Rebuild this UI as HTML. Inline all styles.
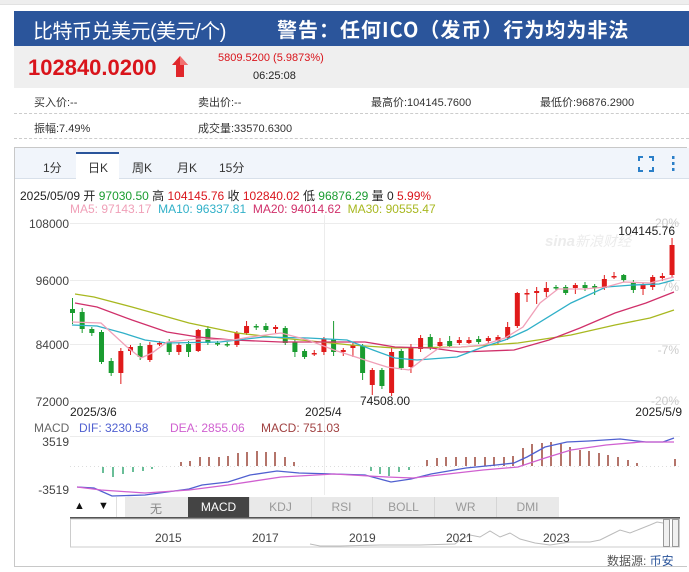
<!DOCTYPE html>
<html><head><meta charset="utf-8"><style>
*{margin:0;padding:0;box-sizing:border-box}
body{width:689px;height:572px;background:#fff;position:relative;overflow:hidden;font-family:"Liberation Sans","Noto Sans CJK SC",sans-serif;color:#333}
.a{position:absolute;white-space:nowrap}
.f11{font-size:11px}.f12{font-size:12px}
</style></head><body>
<div class="a" style="left:0;top:0;width:689px;height:5px;background:#eee;border-bottom:1px solid #e2e2e2"></div>
<div class="a" style="left:14px;top:11px;width:675px;height:35px;background:#2b559b"></div>
<div class="a" style="left:33px;top:15px;font-size:20px;color:#fff;letter-spacing:-0.5px">比特币兑美元(美元/个)</div>
<div class="a" style="left:277px;top:14px;font-size:20px;color:#fff;font-weight:bold;font-family:'Noto Sans CJK SC',sans-serif;letter-spacing:1px">警告：任何ICO（发币）行为均为非法</div>
<div class="a" style="left:14px;top:46px;width:675px;height:42px;background:#efefef"></div>
<div class="a" style="left:28px;top:55px;font-size:22px;font-weight:bold;color:#d9141b">102840.0200</div>
<svg class="a" style="left:172px;top:55px" width="16" height="24"><polygon points="8,1 16,10 12,10 12,22 4,22 4,10 0,10" fill="#e0262b"/><polygon points="8,1 16,10 8,10" fill="#f27070"/></svg>
<div class="a f11" style="left:218px;top:52px;color:#d9141b">5809.5200 (5.9873%)</div>
<div class="a f11" style="left:253px;top:70px;color:#222">06:25:08</div>
<div class="a f11" style="left:34px;top:94px">买入价:--</div>
<div class="a f11" style="left:198px;top:94px">卖出价:--</div>
<div class="a f11" style="left:371px;top:94px">最高价:104145.7600</div>
<div class="a f11" style="left:540px;top:94px">最低价:96876.2900</div>
<div class="a" style="left:14px;top:113px;width:675px;border-top:1px dashed #ccc"></div>
<div class="a f11" style="left:34px;top:120px">振幅:7.49%</div>
<div class="a f11" style="left:198px;top:120px">成交量:33570.6300</div>
<div class="a" style="left:14px;top:138px;width:675px;border-top:1px dashed #ccc"></div>
<div class="a" style="left:14px;top:147px;width:673px;height:420px;border:1px solid #c8c8c8;border-right:none"></div>
<div class="a" style="left:15px;top:148px;width:674px;height:31px;background:#f1f5fb;border-bottom:1px solid #d8e0ea"></div>
<div class="a" style="left:76px;top:152px;width:43px;height:28px;background:#fff;border-top:2px solid #2b559b"></div>
<div class="a f12" style="left:43px;top:159px">1分</div>
<div class="a f12" style="left:88px;top:159px">日K</div>
<div class="a f12" style="left:132px;top:159px">周K</div>
<div class="a f12" style="left:177px;top:159px">月K</div>
<div class="a f12" style="left:219px;top:159px">15分</div>
<svg class="a" style="left:637px;top:155px" width="44" height="18"><g stroke="#2b7fc8" stroke-width="2" fill="none"><path d="M2 6V2H6M12 2H16V6M16 12V16H12M6 16H2V12"/></g><g fill="#2b7fc8"><rect x="35" y="1" width="2.5" height="3"/><rect x="35" y="7" width="2.5" height="3"/><rect x="35" y="13" width="2.5" height="3"/></g></svg>
<div class="a f12" style="left:20px;top:187px;color:#222">2025/05/09 开 <span style="color:#1a9c30">97030.50</span> 高 <span style="color:#d9141b">104145.76</span> 收 <span style="color:#d9141b">102840.02</span> 低 <span style="color:#1a9c30">96876.29</span> 量 0 <span style="color:#d9141b">5.99%</span></div>
<div class="a f12" style="left:70px;top:202px"><span style="color:#f0a0b8">MA5: 97143.17</span>&nbsp; <span style="color:#30b0c8">MA10: 96337.81</span>&nbsp; <span style="color:#d0306a">MA20: 94014.62</span>&nbsp; <span style="color:#a8b820">MA30: 90555.47</span></div>
<svg class="a" style="left:0;top:0" width="689" height="572">
<g stroke="#ececec" stroke-width="1"><line x1="70" y1="223.5" x2="680" y2="223.5"/><line x1="70" y1="280.5" x2="680" y2="280.5"/><line x1="70" y1="344.5" x2="680" y2="344.5"/><line x1="70" y1="401.5" x2="680" y2="401.5"/><line x1="324.5" y1="215" x2="324.5" y2="495"/><line x1="70" y1="436.5" x2="680" y2="436.5"/></g>
<line x1="70" y1="466.5" x2="680" y2="466.5" stroke="#ddd" stroke-dasharray="1,3"/>
<g font-size="12" fill="#444" text-anchor="end" font-family="Liberation Sans"><text x="69" y="228">108000</text><text x="69" y="285">96000</text><text x="69" y="349">84000</text><text x="69" y="406">72000</text><text x="69" y="446">3519</text><text x="69" y="494">-3519</text></g>
<g font-size="12" fill="#ccc" text-anchor="end" font-family="Liberation Sans"><text x="679" y="227">20%</text><text x="679" y="291">7%</text><text x="679" y="354">-7%</text><text x="679" y="405">-20%</text></g>
<text x="545" y="246" font-size="15" font-style="italic" font-weight="bold" fill="#ececec" font-family="Liberation Sans">sina<tspan font-weight="normal" font-size="14">新浪财经</tspan></text>
<g font-size="12" fill="#222" font-family="Liberation Sans"><text x="675" y="235" text-anchor="end">104145.76</text><text x="360" y="405">74508.00</text><text x="70" y="416">2025/3/6</text><text x="305" y="416">2025/4</text><text x="682" y="416" text-anchor="end">2025/5/9</text></g>
<g font-size="12" font-family="Liberation Sans"><text x="34" y="432" fill="#666">MACD</text><text x="79" y="432" fill="#5060d0">DIF: 3230.58</text><text x="170" y="432" fill="#d060d0">DEA: 2855.06</text><text x="261" y="432" fill="#a04040">MACD: 751.03</text></g>
<g id="c" stroke-width="1"></g>
<g fill="none" stroke-width="1.3">
<polyline stroke="#a8b820" points="75,294 94,297 132,307 189,323 237,333 281,338 351,345 395,348 461,347 518,343 571,335 615,325 650,318 674,310"/>
<polyline stroke="#d0306a" points="75,303 97,307 132,320 167,332 198,337 233,340 281,342 334,342 365,342 395,347 431,348 461,352 514,350 549,340 580,328 615,313 646,303 674,292"/>
<polyline stroke="#30b0c8" points="72,325 97,326 123,333 145,340 167,343 220,342 264,337 308,338 347,340 373,350 395,358 417,360 457,357 483,347 505,340 527,330 571,303 606,287 633,285 659,284 674,280"/>
<polyline stroke="#f0a0b8" points="72,322 101,323 127,347 141,358 152,353 167,342 198,339 233,340 250,337 281,333 308,340 334,350 365,360 387,367 409,370 422,360 439,348 461,347 483,345 505,338 523,327 540,303 558,289 584,289 606,287 624,282 650,283 674,277"/>
</g>
<g stroke-width="1.3">
<g stroke="#1a9c60"><line x1="103" y1="467" x2="103" y2="473"/><line x1="113" y1="467" x2="113" y2="477"/><line x1="123" y1="467" x2="123" y2="474"/><line x1="133" y1="467" x2="133" y2="472"/><line x1="143" y1="467" x2="143" y2="471"/><line x1="152" y1="467" x2="152" y2="469"/><line x1="371" y1="467" x2="371" y2="471"/><line x1="380" y1="467" x2="380" y2="474"/><line x1="389" y1="467" x2="389" y2="476"/><line x1="399" y1="467" x2="399" y2="472"/><line x1="409" y1="467" x2="409" y2="470"/></g>
<g stroke="#8b2a1a"><line x1="181" y1="466" x2="181" y2="462"/><line x1="190" y1="466" x2="190" y2="461"/><line x1="200" y1="466" x2="200" y2="457"/><line x1="209" y1="466" x2="209" y2="457"/><line x1="219" y1="466" x2="219" y2="457"/><line x1="228" y1="466" x2="228" y2="456"/><line x1="238" y1="466" x2="238" y2="453"/><line x1="247" y1="466" x2="247" y2="452"/><line x1="257" y1="466" x2="257" y2="451"/><line x1="266" y1="466" x2="266" y2="452"/><line x1="275" y1="466" x2="275" y2="452"/><line x1="285" y1="466" x2="285" y2="457"/><line x1="294" y1="466" x2="294" y2="462"/><line x1="427" y1="466" x2="427" y2="460"/><line x1="437" y1="466" x2="437" y2="458"/><line x1="446" y1="466" x2="446" y2="457"/><line x1="456" y1="466" x2="456" y2="457"/><line x1="466" y1="466" x2="466" y2="457"/><line x1="475" y1="466" x2="475" y2="457"/><line x1="485" y1="466" x2="485" y2="457"/><line x1="494" y1="466" x2="494" y2="457"/><line x1="504" y1="466" x2="504" y2="457"/><line x1="513" y1="466" x2="513" y2="456"/><line x1="523" y1="466" x2="523" y2="448"/><line x1="532" y1="466" x2="532" y2="444"/><line x1="542" y1="466" x2="542" y2="443"/><line x1="551" y1="466" x2="551" y2="442"/><line x1="561" y1="466" x2="561" y2="444"/><line x1="570" y1="466" x2="570" y2="447"/><line x1="580" y1="466" x2="580" y2="450"/><line x1="589" y1="466" x2="589" y2="451"/><line x1="599" y1="466" x2="599" y2="453"/><line x1="608" y1="466" x2="608" y2="455"/><line x1="618" y1="466" x2="618" y2="457"/><line x1="628" y1="466" x2="628" y2="460"/><line x1="637" y1="466" x2="637" y2="463"/><line x1="675" y1="466" x2="675" y2="459"/></g>
</g>
<g fill="none" stroke-width="1.3">
<polyline stroke="#5060d0" points="77,487 94,488 112,496 145,495 167,492 189,489 202,485 228,482 250,475 277,471 299,473 334,474 365,475 391,482 411,479 431,474 466,468 496,465 514,463 527,457 545,447 567,442 589,441 620,439 646,442 663,442 674,438"/>
<polyline stroke="#d060d0" points="77,487 101,490 145,493 189,490 228,485 281,477 334,474 387,477 413,478 439,475 483,470 518,467 545,458 571,450 606,445 641,442 674,442"/>
</g>
<rect x="70" y="517" width="610" height="2" fill="#555"/>
<rect x="70.5" y="519" width="609" height="28" fill="#fff" stroke="#ccc"/>
<polyline fill="none" stroke="#bbb" stroke-width="1" points="310,544 320,546 340,546 380,545 420,545 455,544 460,540 470,535 480,537 490,531 500,537 510,533 520,539 535,543 550,545 570,542 590,542 600,540 610,535 620,530 630,533 640,529 650,525 657,522 663,523"/>
<rect x="663.5" y="519.5" width="6" height="27" fill="#f0f0f0" stroke="#999"/><rect x="672.5" y="519.5" width="6" height="27" fill="#f0f0f0" stroke="#999"/>
<g font-size="12" fill="#444" font-family="Liberation Sans"><text x="155" y="542">2015</text><text x="252" y="542">2017</text><text x="349" y="542">2019</text><text x="446" y="542">2021</text><text x="543" y="542">2023</text></g>
</svg>
<div class="a" style="left:70px;top:497px;width:55px;height:20px;background:#fff"></div>
<div class="a f11" style="left:74px;top:500px;color:#111">▲</div>
<div class="a f11" style="left:98px;top:500px;color:#111">▼</div>
<div class="a" style="left:116px;top:497px;width:1px;height:20px;background:#e0e0e0"></div>
<div class="a" style="left:125px;top:497px;width:434px;height:20px;background:#e9e9e9"></div>
<div class="a" style="left:188px;top:497px;width:61px;height:20px;background:#444"></div>
<div class="a f12" style="left:125px;top:500px;width:62px;text-align:center;color:#888">无</div>
<div class="a f12" style="left:188px;top:500px;width:61px;text-align:center;color:#fff">MACD</div>
<div class="a f12" style="left:250px;top:500px;width:61px;text-align:center;color:#999">KDJ</div>
<div class="a f12" style="left:311px;top:500px;width:61px;text-align:center;color:#999">RSI</div>
<div class="a f12" style="left:373px;top:500px;width:61px;text-align:center;color:#999">BOLL</div>
<div class="a f12" style="left:435px;top:500px;width:61px;text-align:center;color:#999">WR</div>
<div class="a f12" style="left:497px;top:500px;width:61px;text-align:center;color:#999">DMI</div>
<div class="a" style="left:249px;top:497px;width:1px;height:20px;background:#d5d5d5"></div>
<div class="a" style="left:311px;top:497px;width:1px;height:20px;background:#d5d5d5"></div>
<div class="a" style="left:372px;top:497px;width:1px;height:20px;background:#d5d5d5"></div>
<div class="a" style="left:434px;top:497px;width:1px;height:20px;background:#d5d5d5"></div>
<div class="a" style="left:496px;top:497px;width:1px;height:20px;background:#d5d5d5"></div>
<div class="a f12" style="left:607px;top:552px;color:#555">数据源: <span style="color:#2b559b">币安</span></div>
<script>
var d=[[309,313,298,324,0],[312,329,308,333,0],[329,333,327,336,0],[332,362,330,364,0],[361,373,358,376,0],[351,373,348,384,1],[347,351,345,355,1],[346,357,343,360,0],[345,360,342,362,1],[343,344,341,346,1],[342,352,339,355,0],[345,352,343,355,1],[344,352,341,357,0],[330,351,329,352,1],[329,343,326,345,0],[343,344,341,346,0],[344,345,342,347,0],[333,345,331,347,1],[326,333,321,335,1],[326,327,324,330,0],[326,330,323,332,0],[327,329,325,333,1],[328,343,326,345,0],[342,352,340,357,0],[351,357,349,359,0],[353,354,350,356,1],[339,352,337,355,1],[339,352,321,356,0],[350,352,348,356,1],[345,348,343,357,1],[346,373,344,380,0],[370,385,368,395,1],[370,386,368,389,0],[352,393,348,396,1],[351,368,349,370,0],[348,367,344,373,1],[338,349,335,352,1],[337,347,334,350,0],[342,346,338,348,1],[341,346,336,348,0],[340,343,337,345,1],[340,343,337,344,1],[339,342,336,344,0],[338,341,336,343,1],[337,341,335,344,1],[327,338,322,340,1],[293,326,292,328,1],[293,294,289,302,1],[291,293,287,304,1],[288,292,282,297,1],[287,288,285,290,0],[287,293,285,295,0],[285,288,283,294,1],[285,288,282,291,0],[286,287,284,295,0],[279,288,275,290,1],[276,277,272,279,1],[275,280,274,282,0],[282,290,280,293,0],[285,289,283,295,1],[277,287,275,290,1],[276,278,273,281,1],[245,275,238,277,1]];
var s='';d.forEach(function(c,i){var x=72.5+9.67*i,col=c[4]?'#e01a1a':'#1a9c30';var h=Math.max(1.5,c[1]-c[0]);s+='<line x1="'+x+'" x2="'+x+'" y1="'+c[2]+'" y2="'+c[3]+'" stroke="'+col+'"/><rect x="'+(x-2.5)+'" y="'+c[0]+'" width="5" height="'+h+'" fill="'+col+'"/>';});
document.getElementById('c').innerHTML=s;
</script>
</body></html>
